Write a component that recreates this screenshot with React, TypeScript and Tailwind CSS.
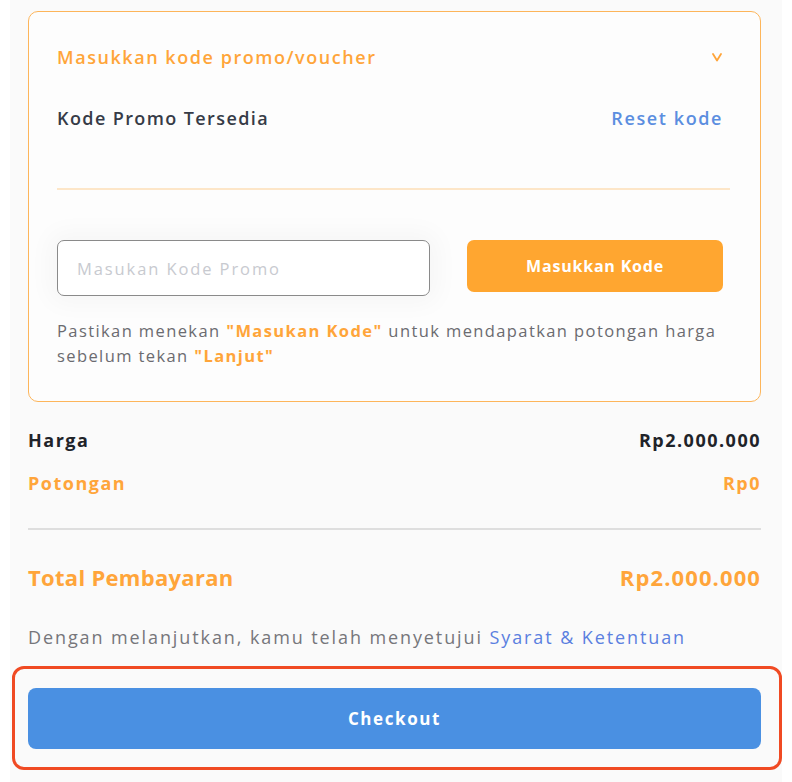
const font = { fontFamily: '"Open Sans", "Liberation Sans", sans-serif' };

function SummaryRow({ label, value, className }: { label: string; value: string; className: string }) {
  return (
    <div className={`flex items-center justify-between ${className}`}>
      <span>{label}</span>
      <span>{value}</span>
    </div>
  );
}

export default function App() {
  return (
    <div className="w-[792px] h-[782px] bg-white pl-[10px] pr-[10px] overflow-hidden" style={font}>
      <div className="h-full bg-[#fafafa] pl-[18px] pr-[21px] pt-[11px]">
        {/* promo card */}
        <div className="h-[391px] rounded-[10px] border-[1.5px] border-[#fdb55a] bg-[#fdfdfd] pl-[28px] pr-[30px] pt-[33px]">
          <div className="flex h-[24px] items-center justify-between pr-[8px]">
            <span className="text-[18px] font-semibold tracking-[1.55px] text-[#ffa53a]">Masukkan kode promo/voucher</span>
            <svg viewBox="0 0 10 10" className="h-[10px] w-[10px]" fill="none" stroke="#ffa53a" strokeWidth="1.8" strokeLinecap="round" strokeLinejoin="round">
              <polyline points="1,2 5,8.5 9,2" />
            </svg>
          </div>
          <div className="mt-[37px] flex h-[24px] items-center justify-between pr-[7px]">
            <span className="text-[18px] font-semibold tracking-[1.4px] text-[#363b47]">Kode Promo Tersedia</span>
            <button className="text-[18px] font-semibold tracking-[1.6px] text-[#5b8ee0]">Reset kode</button>
          </div>
          <div className="mt-[58px] h-[2px] bg-[#fde6c8]" />
          <div className="mt-[50px] flex items-start gap-[37px] pr-[7px]">
            <input
              placeholder="Masukan Kode Promo"
              className="h-[56px] w-[373px] rounded-[7px] border-[1.5px] border-[#8a8a8a] bg-white px-[19px] text-[16.5px] tracking-[1.9px] text-[#333] shadow-[0_0_24px_8px_rgba(0,0,0,0.03)] outline-none placeholder:text-[#c8cad0]"
              style={font}
            />
            <button className="h-[52px] flex-1 rounded-[7px] bg-[#ffa630] text-[16px] font-bold tracking-[0.8px] text-white">
              Masukkan Kode
            </button>
          </div>
          <p className="mt-[22px] text-[16.5px] leading-[25px] tracking-[1.4px] text-[#6b6b70]">
            Pastikan menekan <span className="font-bold text-[#ffa53a]">"Masukan Kode"</span> untuk mendapatkan potongan harga
            sebelum tekan <span className="font-bold text-[#ffa53a]">"Lanjut"</span>
          </p>
        </div>

        {/* summary */}
        <SummaryRow label="Harga" value="Rp2.000.000" className="mt-[26px] h-[24px] text-[18px] font-bold tracking-[1.5px] text-[#1f2329]" />
        <SummaryRow label="Potongan" value="Rp0" className="mt-[19px] h-[24px] text-[18px] font-bold tracking-[1.5px] text-[#ffa53a]" />
        <div className="mt-[33px] h-[2px] bg-[#dedede]" />
        <div className="mt-[33px] flex h-[28px] items-center justify-between text-[22px] font-bold text-[#ffa53a]">
          <span className="tracking-[0.3px]">Total Pembayaran</span>
          <span className="tracking-[1.1px]">Rp2.000.000</span>
        </div>
        <p className="mt-[34px] h-[24px] text-[18px] leading-[24px] tracking-[1.9px] text-[#76767b]">
          Dengan melanjutkan, kamu telah menyetujui <span className="text-[#5b7fe0]">Syarat &amp; Ketentuan</span>
        </p>

        {/* checkout, highlighted */}
        <div className="mt-[17px] -ml-[16px] -mr-[21px] rounded-[12px] border-[3px] border-[#f04a23] pb-[18px] pl-[13px] pr-[18px] pt-[19px]">
          <button className="h-[61px] w-full rounded-[8px] bg-[#4a90e2] text-[17px] font-bold tracking-[1.6px] text-white">Checkout</button>
        </div>
      </div>
    </div>
  );
}
